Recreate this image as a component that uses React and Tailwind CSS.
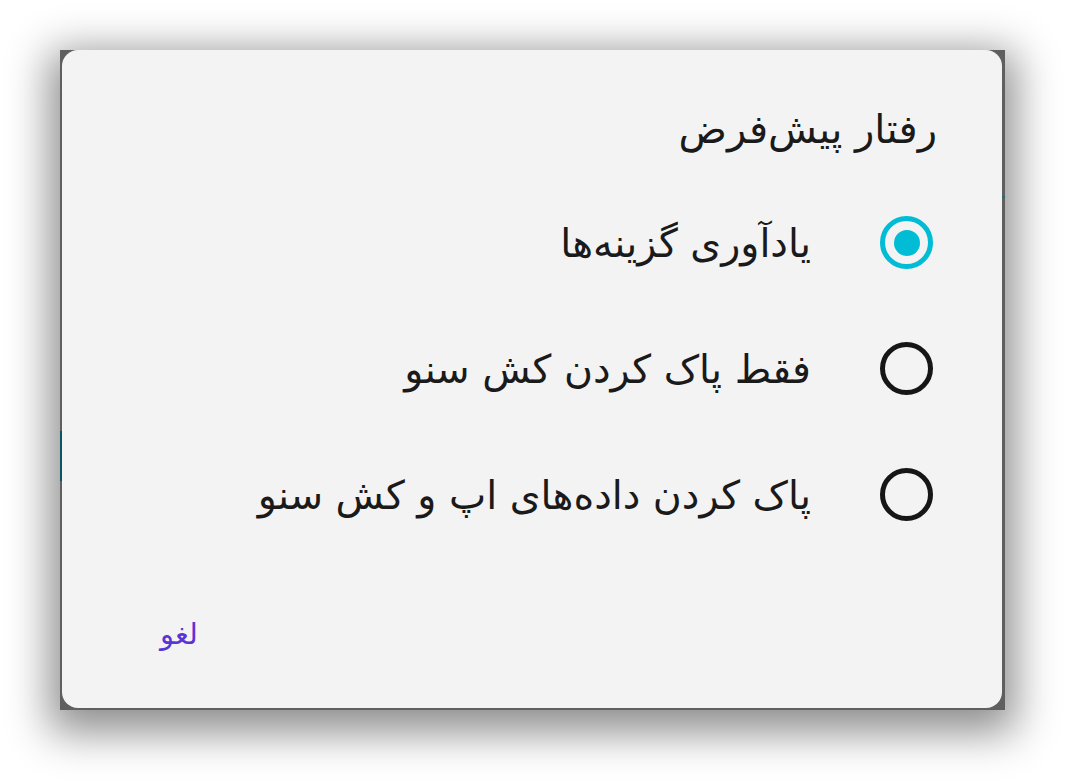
import React from "react";

const options = [
  { label: "یادآوری گزینه‌ها", selected: true },
  { label: "فقط پاک کردن کش سنو", selected: false },
  { label: "پاک کردن داده‌های اپ و کش سنو", selected: false },
];

function Radio({ selected }) {
  if (selected) {
    return (
      <div className="w-[53px] h-[53px] rounded-full border-[5px] border-[#00bcd4] flex items-center justify-center shrink-0">
        <div className="w-[26px] h-[26px] rounded-full bg-[#00bcd4]" />
      </div>
    );
  }
  return <div className="w-[53px] h-[53px] rounded-full border-[5px] border-[#161616] shrink-0" />;
}

export default function App() {
  return (
    <div className="w-[1065px] h-[780px] bg-white overflow-hidden pt-[50px] pl-[60px]" style={{ fontFamily: '"DejaVu Sans", sans-serif' }}>
      <div className="relative w-[945px] h-[660px] bg-[#5f5f5f] shadow-[0_12px_40px_10px_rgba(0,0,0,0.45)]">
        {/* bits of the screen behind the dialog */}
        <div className="absolute left-0 top-[381px] w-[2px] h-[50px] bg-[#0b5563]" />
        <div className="absolute right-0 top-[146px] w-[3px] h-[2px] bg-[#1f6b78]" />

        <div dir="rtl" className="ml-[2px] w-[940px] h-[658px] rounded-[16px] bg-[#f3f3f3] flex flex-col pr-[65px] pl-[98px]">
          <div className="pt-[53px] text-[40px] leading-[52px] text-[#1a1a1a]">رفتار پیش‌فرض</div>
          <div className="mt-[61px] flex flex-col">
            {options.map((o) => (
              <div key={o.label} className="h-[126px] flex items-start pr-[4px]">
                <div className="flex items-center gap-[69px] h-[53px]">
                  <Radio selected={o.selected} />
                  <span className="text-[39.5px] leading-[52px] text-[#1a1a1a] whitespace-nowrap">{o.label}</span>
                </div>
              </div>
            ))}
          </div>
          <div className="mt-auto mb-[56px] flex justify-end">
            <span className="text-[29px] leading-[36px] text-[#5b34d6]">لغو</span>
          </div>
        </div>
      </div>
    </div>
  );
}
